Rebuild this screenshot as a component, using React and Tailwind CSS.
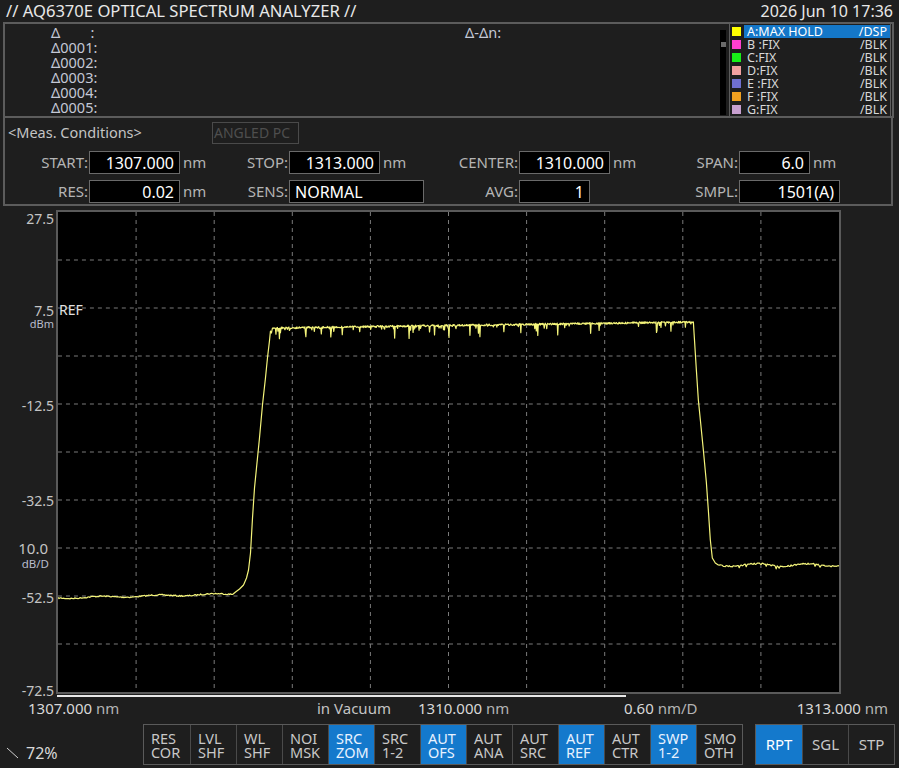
import React from "react";

const FONT = { fontFamily: '"Noto Sans", "Open Sans", sans-serif' };

const markers = ["Δ        :", "Δ0001:", "Δ0002:", "Δ0003:", "Δ0004:", "Δ0005:"];

const traces = [
  { name: "A:MAX HOLD", mode: "/DSP", color: "bg-[#ffff00]", active: true },
  { name: "B :FIX", mode: "/BLK", color: "bg-[#ff3fd0]" },
  { name: "C:FIX", mode: "/BLK", color: "bg-[#18f018]" },
  { name: "D:FIX", mode: "/BLK", color: "bg-[#f2a0a0]" },
  { name: "E :FIX", mode: "/BLK", color: "bg-[#7070d0]" },
  { name: "F :FIX", mode: "/BLK", color: "bg-[#f0a020]" },
  { name: "G:FIX", mode: "/BLK", color: "bg-[#c8a0d0]" },
];

const buttons = [
  ["RES", "COR"], ["LVL", "SHF"], ["WL", "SHF"], ["NOI", "MSK"], ["SRC", "ZOM", true],
  ["SRC", "1-2"], ["AUT", "OFS", true], ["AUT", "ANA"], ["AUT", "SRC"], ["AUT", "REF", true],
  ["AUT", "CTR"], ["SWP", "1-2", true], ["SMO", "OTH"],
];

// label tops relative to the chart row
const yLabels = [
  { v: "27.5", y: 2 }, { v: "7.5", y: 94 }, { v: "-12.5", y: 189 }, { v: "-32.5", y: 284 },
  { v: "-52.5", y: 381 }, { v: "-72.5", y: 474 },
];

// seeded noise so the trace is the same every render
function rng(seed) {
  let s = seed;
  return () => {
    s = (s * 16807) % 2147483647;
    return (s - 1) / 2147483646;
  };
}

function buildTrace() {
  const r = rng(7);
  const pts = [];
  // left floor, screen coords minus plot origin (57, 213)
  for (let x = 0; x <= 175; x += 1) {
    const y = 386 - (x / 175) * 4 + Math.sin(x / 9) * 0.8 + (r() - 0.5) * 1.2;
    pts.push([x, y]);
  }
  const rise = [
    [178, 380], [182, 377], [186, 373], [189, 366], [191, 358], [193, 341], [195, 306],
    [197, 276], [199, 256], [202, 226], [205, 193], [208, 166], [210, 146], [212, 129],
    [213, 119], [214, 121], [215, 116],
  ];
  pts.push(...rise);
  // flat top with downward spikes
  for (let x = 215.5; x <= 636; x += 0.5) {
    let y = 116 - ((x - 215) / 421) * 6 + (r() - 0.5) * 1.8;
    const p = r();
    const k = x < 400 ? 0.04 : 0.018;
    if (p < k) y += 3 + r() * 9;
    else if (p < k * 3) y += 1.5 + r() * 2.5;
    pts.push([x, y]);
  }
  const fall = [
    [637, 110], [638, 126], [640, 158], [642, 188], [644, 208], [647, 238], [650, 270],
    [652, 298], [654, 328], [656, 346], [659, 351], [662, 353],
  ];
  pts.push(...fall);
  for (let x = 663; x <= 783; x += 1) {
    const y = 353 + Math.sin((x - 663) / 8) * 1.4 + (r() - 0.5) * 1.5 + (r() < 0.04 ? 2.5 : 0);
    pts.push([x, y]);
  }
  return pts.map(([x, y]) => `${x.toFixed(1)},${y.toFixed(1)}`).join(" ");
}

const tracePoints = buildTrace();

function Field({ label, value, unit, w, labelW, boxW, left }) {
  return (
    <div className={`flex items-center shrink-0 ${w}`}>
      <span className={`shrink-0 text-right text-[15px] text-[#b4b4b4] pr-[1px] ${labelW}`}>{label}</span>
      <div
        className={`shrink-0 h-[23px] bg-black border border-[#6a6a6a] flex items-center px-[5px] text-[16px] text-white ${boxW} ${left ? "justify-start" : "justify-end"}`}
      >
        {value}
      </div>
      {unit && <span className="ml-[3px] text-[15px] text-[#b4b4b4]">{unit}</span>}
    </div>
  );
}

function Plot() {
  const hLines = [48, 96, 144, 192, 240, 288, 336, 384, 432];
  const vLines = [1, 2, 3, 4, 5, 6, 7, 8, 9].map((i) => (i * 783) / 10);
  return (
    <svg viewBox="0 0 783 480" preserveAspectRatio="none" className="w-full h-full block">
      {hLines.map((y) => (
        <line key={"h" + y} x1="0" x2="783" y1={y} y2={y} stroke="#7a7a7a" strokeWidth="1" strokeDasharray="4 4" />
      ))}
      {vLines.map((x) => (
        <line key={"v" + x} x1={x} x2={x} y1="0" y2="480" stroke="#7a7a7a" strokeWidth="1" strokeDasharray="4 4" />
      ))}
      <polyline points={tracePoints} fill="none" stroke="#f4f47a" strokeWidth="1.2" strokeLinejoin="round" />
    </svg>
  );
}

export default function App() {
  return (
    <div className="w-[899px] h-[768px] bg-[#1e1e1e] text-white overflow-hidden flex flex-col" style={FONT}>
      {/* title */}
      <div className="h-[22px] flex items-center justify-between px-[6px] text-[16.6px] text-[#e8e8e8] leading-none">
        <span>// AQ6370E OPTICAL SPECTRUM ANALYZER //</span>
        <span className="text-[16px]">2026 Jun 10 17:36</span>
      </div>

      {/* marker panel */}
      <div className="mx-[3px] w-[891px] h-[96px] border-2 border-[#5c5c5c] flex">
        <div className="w-[460px] pl-[46px] pt-[1px] flex flex-col text-[14.5px] leading-[15px] text-[#c4c8d6]">
          {markers.map((m) => (
            <span key={m} className="whitespace-pre">{m}</span>
          ))}
        </div>
        <div className="flex-1 pt-[1px] text-[14.5px] leading-[15px] text-[#c4c8d6]">Δ-Δn:</div>
        <div className="w-[6px] mt-[6px] mb-[1px] bg-black mr-[3px] flex flex-col items-center">
          <div className="w-[5px] h-[5px] bg-[#6a6a6a] mt-[12px]" />
        </div>
        <div className="w-[162px] h-[92px] border-l border-r border-[#5c5c5c] mr-[1px] flex flex-col text-[12.5px] leading-[13px] text-[#d8d8d8]">
          <div className="h-[1px]" />
          {traces.map((t) => (
            <div key={t.name} className="flex items-center h-[13px]">
              <div className={`w-[9px] h-[9px] ml-[2px] mr-[3px] ${t.color}`} />
              <div className={`flex-1 flex justify-between pl-[3px] pr-[3px] h-[13px] ${t.active ? "bg-[#1477c8] text-white" : ""}`}>
                <span>{t.name}</span>
                <span>{t.mode}</span>
              </div>
            </div>
          ))}
        </div>
      </div>

      {/* measurement conditions */}
      <div className="mx-[3px] w-[890px] h-[88px] border-2 border-t-0 border-[#5c5c5c] flex flex-col">
        <div className="flex items-center h-[29px]">
          <span className="pl-[3px] text-[14.5px] text-[#c4c4c4] w-[207px]">&lt;Meas. Conditions&gt;</span>
          <div className="w-[87px] h-[22px] border border-[#4a4a4a] text-[14px] text-[#4e4e4e] flex items-center px-[1px]">ANGLED PC</div>
        </div>
        <div className="flex items-center mt-[4px]">
          <Field label="START:" value="1307.000" unit="nm" w="w-[215px]" labelW="w-[84px]" boxW="w-[91px]" />
          <Field label="STOP:" value="1313.000" unit="nm" w="w-[220px]" labelW="w-[69px]" boxW="w-[91px]" />
          <Field label="CENTER:" value="1310.000" unit="nm" w="w-[220px]" labelW="w-[79px]" boxW="w-[91px]" />
          <Field label="SPAN:" value="6.0" unit="nm" w="w-[220px]" labelW="w-[79px]" boxW="w-[71px]" />
        </div>
        <div className="flex items-center mt-[6px]">
          <Field label="RES:" value="0.02" unit="nm" w="w-[215px]" labelW="w-[84px]" boxW="w-[91px]" />
          <Field label="SENS:" value="NORMAL" w="w-[220px]" labelW="w-[69px]" boxW="w-[135px]" left />
          <Field label="AVG:" value="1" w="w-[220px]" labelW="w-[79px]" boxW="w-[71px]" />
          <Field label="SMPL:" value="1501(A)" w="w-[220px]" labelW="w-[79px]" boxW="w-[101px]" />
        </div>
      </div>

      {/* chart */}
      <div className="flex mt-[4px] h-[484px]">
        <div className="relative w-[56px] text-[14px] text-[#c4c4c4]">
          {yLabels.map((l) => (
            <span key={l.v} className="absolute right-[2px] leading-none" style={{ top: l.y }}>
              {l.v}
            </span>
          ))}
          <span className="absolute right-[2px] top-[108px] text-[11px] leading-none text-[#b8bccc]">dBm</span>
          <span className="absolute right-[8px] top-[331px] text-[15px] leading-none">10.0</span>
          <span className="absolute right-[7px] top-[348px] text-[11.5px] leading-none text-[#b8bccc]">dB/D</span>
        </div>
        <div className="relative w-[785px] h-[484px] border-2 border-[#5a5a5a] bg-black">
          <Plot />
          <span className="absolute left-[1px] top-[91px] text-[14px] leading-none text-[#e0e0e0]">REF</span>
        </div>
      </div>
      <div className="ml-[57px] w-[569px] h-[2px] bg-[#e8e8e8] mt-[1px]" />

      {/* x axis */}
      <div className="grid grid-cols-[28px_289px_101px_206px_1fr] items-center h-[22px] text-[15px] text-[#d8d8d8] pr-[11px]">
        <span />
        <span>1307.000 <span className="text-[#b4b4b4]">nm</span></span>
        <span className="text-[#c4c4c4]">in Vacuum</span>
        <span>1310.000 <span className="text-[#b4b4b4]">nm</span></span>
        <div className="flex justify-between">
          <span>0.60 <span className="text-[#b4b4b4]">nm/D</span></span>
          <span>1313.000 <span className="text-[#b4b4b4]">nm</span></span>
        </div>
      </div>

      {/* soft keys */}
      <div className="flex items-end mt-[5px]">
        <div className="w-[143px] flex items-center pl-[6px] text-[16px] text-[#d8d8d8]">
          <svg width="14" height="14" viewBox="0 0 14 14" className="mr-[6px]">
            <line x1="1" y1="2" x2="12" y2="12" stroke="#cfcfcf" strokeWidth="1" />
          </svg>
          <span>72%</span>
        </div>
        <div className="flex border border-[#5a5a5a]">
          {buttons.map(([a, b, on], i) => (
            <div
              key={a + b + i}
              className={`w-[46px] h-[39px] flex flex-col justify-center pl-[7px] text-[14.5px] leading-[14px] ${i > 0 ? "border-l border-[#4a4a4a]" : ""} ${on ? "bg-[#1479cc] text-[#e8f2ff]" : "bg-[#1e1e1e] text-[#c8c8c8]"}`}
            >
              <span>{a}</span>
              <span>{b}</span>
            </div>
          ))}
        </div>
        <div className="flex border border-[#5a5a5a] ml-[12px]">
          {["RPT", "SGL", "STP"].map((t, i) => (
            <div
              key={t}
              className={`w-[46px] h-[39px] flex items-center justify-center text-[15px] ${i > 0 ? "border-l border-[#4a4a4a]" : ""} ${i === 0 ? "bg-[#1479cc] text-white" : "text-[#c8c8c8]"}`}
            >
              {t}
            </div>
          ))}
        </div>
      </div>
    </div>
  );
}
